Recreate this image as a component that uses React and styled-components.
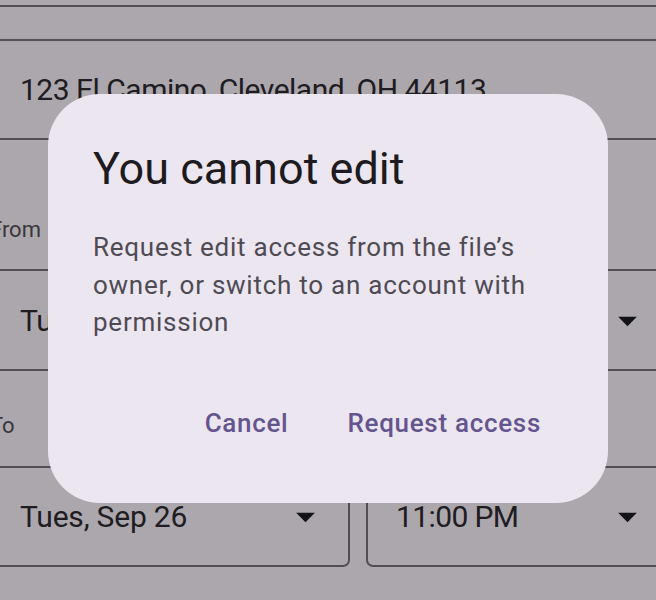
import React from "react";
import styled, { createGlobalStyle } from "styled-components";

const Global = createGlobalStyle`
  html, body {
    margin: 0;
    padding: 0;
    overflow: hidden;
    background: #fef7ff;
    font-family: Roboto, "Liberation Sans", sans-serif;
  }
`;

const Page = styled.div`
  width: 682px;
  margin-left: -10px;
  display: flex;
  flex-direction: column;
  height: 600px;
`;

const Field = styled.div`
  box-sizing: border-box;
  height: ${(p) => p.$h || 101}px;
  margin-top: ${(p) => p.$mt || 0}px;
  border: 2px solid #79747e;
  border-radius: 7px;
  display: flex;
  align-items: center;
  padding: 0 20px 0 28px;
  color: #2f2c33;
  font-size: 30px;
  letter-spacing: ${(p) => p.$ls || "-0.2px"};
  white-space: nowrap;
  overflow: hidden;
`;

const FieldText = styled.span`
  flex: 1;
`;

const Label = styled.div`
  margin-top: ${(p) => p.$mt}px;
  font-size: 22px;
  line-height: 30px;
  color: #55515b;
`;

const Row = styled.div`
  display: grid;
  grid-template-columns: 360px 306px;
  gap: 16px;
  margin-top: ${(p) => p.$mt}px;
`;

const Arrow = () => (
  <svg width="45" height="45" viewBox="0 0 24 24" aria-hidden="true">
    <path d="M7 10l5 5 5-5z" fill="#1d1b20" />
  </svg>
);

const Scrim = styled.div`
  position: fixed;
  inset: 0;
  background: rgba(0, 0, 0, 0.32);
  display: flex;
  align-items: center;
  justify-content: center;
`;

const Dialog = styled.div`
  box-sizing: border-box;
  width: 560px;
  margin-top: -3px;
  background: #ece6f0;
  border-radius: 52px;
  padding: 45px 45px 42px;
  display: flex;
  flex-direction: column;
`;

const Title = styled.h2`
  margin: 0;
  font-weight: 400;
  font-size: 45px;
  line-height: 60px;
  color: #1d1b20;
`;

const Body = styled.p`
  margin: 30px 0 0;
  font-size: 26px;
  line-height: 37.5px;
  letter-spacing: 0.75px;
  color: #4f4b55;
`;

const Actions = styled.div`
  display: flex;
  justify-content: flex-end;
  gap: 15px;
  margin-top: 44px;
`;

const TextButton = styled.button`
  height: 75px;
  padding: 0 22px;
  border: none;
  border-radius: 40px;
  background: transparent;
  font-family: Roboto, "Liberation Sans", sans-serif;
  font-size: 26px;
  font-weight: 500;
  letter-spacing: 0.7px;
  color: #65558f;
  cursor: pointer;
`;

export default function App() {
  return (
    <>
      <Global />
      <Page>
        <Field $h={60} $mt={-53} />
        <Field $mt={32} $ls="-0.5px">
          <FieldText>123 El Camino, Cleveland, OH 44113</FieldText>
        </Field>
        <Label $mt={75}>From</Label>
        <Row $mt={24}>
          <Field $h={102}>
            <FieldText>Tues, Sep 26</FieldText>
            <Arrow />
          </Field>
          <Field $h={102}>
            <FieldText>10:00 PM</FieldText>
            <Arrow />
          </Field>
        </Row>
        <Label $mt={40}>To</Label>
        <Row $mt={25}>
          <Field>
            <FieldText>Tues, Sep 26</FieldText>
            <Arrow />
          </Field>
          <Field $ls="-0.6px">
            <FieldText>11:00 PM</FieldText>
            <Arrow />
          </Field>
        </Row>
      </Page>
      <Scrim>
        <Dialog role="dialog">
          <Title>You cannot edit</Title>
          <Body>
            Request edit access from the file’s owner, or switch to an account
            with permission
          </Body>
          <Actions>
            <TextButton>Cancel</TextButton>
            <TextButton>Request access</TextButton>
          </Actions>
        </Dialog>
      </Scrim>
    </>
  );
}
